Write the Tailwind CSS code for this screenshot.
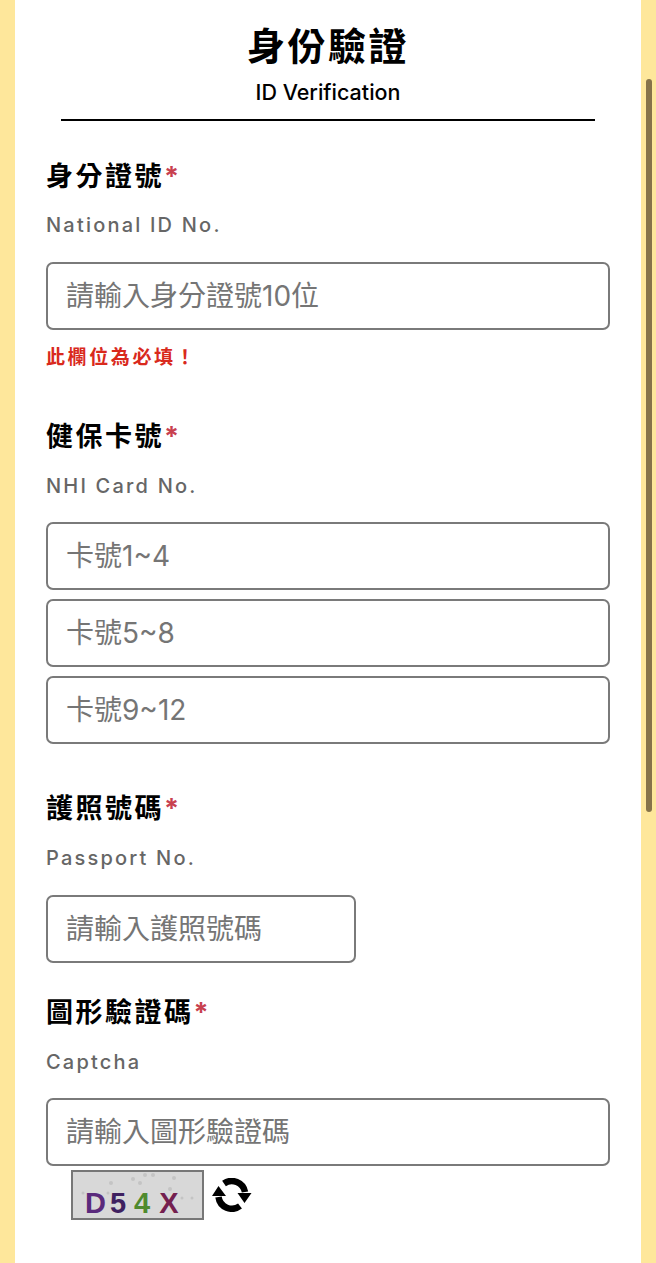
<!DOCTYPE html>
<html lang="zh-Hant">
<head>
    <meta charset="UTF-8">
    <meta name="viewport" content="width=device-width, initial-scale=1.0">
    <title>身份驗證</title>
    <script src="https://cdn.jsdelivr.net/npm/@tailwindcss/browser@4"></script>
</head>
<body class="bg-[#fee79b] h-[1263px] overflow-hidden relative font-['Inter','Noto_Sans_CJK_TC',sans-serif]">
    <div class="ml-[15px] w-[626px] h-full bg-white pl-[31px] pr-[31px]">
        <div class="text-center">
            <h1 class="pt-[19px] text-[38px] leading-[54px] font-bold text-black tracking-[2.5px]">身份驗證</h1>
            <p class="mt-[6px] text-[21.5px] leading-[26px] font-medium text-black">ID Verification</p>
            <div class="mx-[15px] mt-[14px] h-[2px] bg-black"></div>
        </div>

        <label class="block mt-[38px] text-[27px] leading-[36px] font-bold text-black tracking-[2.5px]">身分證號<span class="text-[#c8414f]">*</span></label>
        <p class="mt-[16px] text-[20px] leading-[28px] font-medium text-[#666] tracking-[2.2px]">National ID No.</p>
        <input type="text" placeholder="請輸入身分證號10位" class="block mt-[23px] w-[564px] h-[68px] border-2 border-[#7a7a7a] rounded-[7px] px-[18px] text-[28px] placeholder:text-[#757575]">
        <p class="mt-[15px] text-[19px] leading-[26px] font-bold text-[#d9291c] tracking-[2.6px]">此欄位為必填！</p>

        <label class="block mt-[48px] text-[27px] leading-[36px] font-bold text-black tracking-[2.5px]">健保卡號<span class="text-[#c8414f]">*</span></label>
        <p class="mt-[17px] text-[20px] leading-[28px] font-medium text-[#666] tracking-[2.2px]">NHI Card No.</p>
        <div class="mt-[22px] flex flex-col gap-[9px]">
            <input type="text" placeholder="卡號1~4" class="block w-[564px] h-[68px] border-2 border-[#7a7a7a] rounded-[7px] px-[18px] text-[28px] placeholder:text-[#757575]">
            <input type="text" placeholder="卡號5~8" class="block w-[564px] h-[68px] border-2 border-[#7a7a7a] rounded-[7px] px-[18px] text-[28px] placeholder:text-[#757575]">
            <input type="text" placeholder="卡號9~12" class="block w-[564px] h-[68px] border-2 border-[#7a7a7a] rounded-[7px] px-[18px] text-[28px] placeholder:text-[#757575]">
        </div>

        <label class="block mt-[47px] text-[27px] leading-[36px] font-bold text-black tracking-[2.5px]">護照號碼<span class="text-[#c8414f]">*</span></label>
        <p class="mt-[17px] text-[20px] leading-[28px] font-medium text-[#666] tracking-[2.2px]">Passport No.</p>
        <input type="text" placeholder="請輸入護照號碼" class="block mt-[23px] w-[310px] h-[68px] border-2 border-[#7a7a7a] rounded-[7px] px-[18px] text-[28px] placeholder:text-[#757575]">

        <label class="block mt-[32px] text-[27px] leading-[36px] font-bold text-black tracking-[2.5px]">圖形驗證碼<span class="text-[#c8414f]">*</span></label>
        <p class="mt-[17px] text-[20px] leading-[28px] font-medium text-[#666] tracking-[2.2px]">Captcha</p>
        <input type="text" placeholder="請輸入圖形驗證碼" class="block mt-[22px] w-[564px] h-[68px] border-2 border-[#7a7a7a] rounded-[7px] px-[18px] text-[28px] placeholder:text-[#757575]">

        <div class="mt-[4px] ml-[25px] flex items-center gap-[8px]">
            <div class="relative w-[133px] h-[50px] bg-[#d8d8d8] border-2 border-[#777] flex items-end pl-[12px] font-['Liberation_Sans',sans-serif] text-[29px] leading-[29px] font-bold">
                <svg class="absolute inset-0" width="129" height="46" viewBox="0 0 129 46" fill="#c4c4c4">
                    <circle cx="38" cy="11" r="2"/><circle cx="60" cy="7" r="2"/><circle cx="67" cy="11" r="2"/><circle cx="72" cy="3" r="2"/><circle cx="80" cy="3" r="2"/><circle cx="101" cy="6" r="2"/><circle cx="97" cy="17" r="2"/><circle cx="10" cy="21" r="1.5"/><circle cx="35" cy="21" r="1.5"/><circle cx="109" cy="26" r="1.5"/><circle cx="119" cy="26" r="1.5"/>
                </svg>
                <span class="relative text-[#5a2a7c]">D</span>
                <span class="relative ml-[4px] text-[#3f2160]">5</span>
                <span class="relative ml-[8px] text-[#4f8a2e]">4</span>
                <span class="relative ml-[9px] text-[#74204f]">X</span>
            </div>
            <svg width="40" height="34" viewBox="0 0 40 34" fill="none">
                <path d="M12 5.5 A13.5 13.5 0 0 1 33 14" stroke="#000" stroke-width="6.5"/>
                <path d="M28 28 A13.5 13.5 0 0 1 6.5 19" stroke="#000" stroke-width="6.5"/>
                <path d="M0 18 L14 18 L6.5 8 Z M25.5 15 L39.5 15 L32.5 25 Z" fill="#000"/>
            </svg>
        </div>
    </div>
    <div class="absolute left-[646px] top-[79px] w-[6px] h-[733px] rounded-full bg-[#86734a]"></div>
</body>
</html>
